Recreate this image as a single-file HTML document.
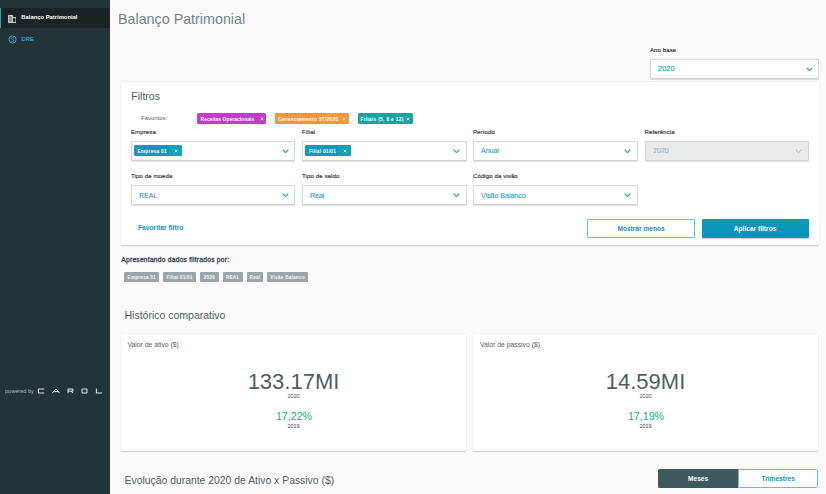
<!DOCTYPE html>
<html><head><meta charset="utf-8">
<style>
*{box-sizing:border-box;margin:0;padding:0}
html,body{width:826px;height:494px;overflow:hidden}
body{font-family:"Liberation Sans",sans-serif;background:#fafafa;position:relative;color:#4a5c64}
.abs{position:absolute;white-space:nowrap;line-height:1}
#side{left:0;top:0;width:110px;height:494px;background:#233438}
#side .act{left:0;top:8px;width:110px;height:20px;background:#1a2427;border-left:1px solid #14aabb}
#side .t1{left:21.3px;top:15px;font-size:5.85px;font-weight:bold;color:#fff}
#side .t2{left:21.6px;top:36.6px;font-size:5.8px;color:#18acdc;-webkit-text-stroke:0.2px #18acdc}
.pow{left:5px;top:389.2px;font-size:5.6px;color:#b3bdc1;letter-spacing:0px}
h1{left:118px;top:12px;font-size:14.3px;font-weight:normal;color:#72838b}
.lbl{font-size:6px;letter-spacing:0.12px;color:#3a3a3a;font-weight:normal;-webkit-text-stroke:0.18px #3a3a3a}
.sel{position:absolute;background:#fff;border:1px solid #d6dadb;border-bottom-color:#cdd2d3;height:19.5px;border-radius:1px;box-shadow:0 0.6px 0.8px rgba(0,0,0,.12)}
.sel .v{position:absolute;left:7px;top:5.3px;font-size:7px;color:#229ccb;line-height:1;-webkit-text-stroke:0.1px #229ccb}
.chev{position:absolute;right:5.5px;top:6.6px;width:7px;height:4.5px}
.card{position:absolute;background:#fff;box-shadow:0 0.6px 1.4px rgba(0,0,0,.2);border-radius:1px}
.chip{position:absolute;height:10.5px;font-size:4.8px;font-weight:bold;color:#fff;border-radius:1.5px;line-height:1;white-space:nowrap;overflow:hidden}
.tag{position:absolute;top:272px;height:9.6px;background:#9aa5a9;color:#f4f6f6;font-size:4.7px;letter-spacing:0.2px;font-weight:bold;line-height:9.6px;padding-top:1.2px;text-align:center;border-radius:1px}
.big{position:absolute;width:345px;text-align:center;line-height:1}
</style></head><body>
<div id="side" class="abs">
  <div class="abs act"></div>
  <svg class="abs" style="left:7.8px;top:14.5px" width="8.4" height="8" viewBox="0 0 8.4 8"><path d="M0.45 0.45H4.6V7.55H0.45Z M1.9 0.45V7.55 M3.2 0.45V7.55" fill="none" stroke="#fff" stroke-width="0.8"/><path d="M4.6 2.6H7.9V7.55H4.6" fill="none" stroke="#fff" stroke-width="0.8"/></svg>
  <div class="abs t1">Balanço Patrimonial</div>
  <svg class="abs" style="left:7.5px;top:35px" width="9" height="9" viewBox="0 0 9 9"><circle cx="4.5" cy="4.5" r="3.6" fill="none" stroke="#1aaedc" stroke-width="0.95"/><path d="M5.8 3.1C5.5 2.5 3.3 2.4 3.3 3.5C3.3 4.6 5.8 4.3 5.8 5.5C5.8 6.6 3.5 6.6 3.1 5.9" fill="none" stroke="#1aaedc" stroke-width="0.85"/></svg>
  <div class="abs t2">DRE</div>
  <div class="abs pow">powered by</div>
  <svg class="abs" style="left:37px;top:388px" width="67" height="6" viewBox="0 0 67 6">
    <g fill="none" stroke="#e6ecee" stroke-width="1">
      <path d="M7.2 1H1.4V5H7.2"/>
      <path d="M15.2 5.2L18.9 0.9L22.6 5.2M16.6 3.6H21.2"/>
      <path d="M31 5.2V1H36V3.1H31M34.2 3.1L36 5.2"/>
      <path d="M45 1H50V5H45Z"/>
      <path d="M59.4 0.5V5H65"/>
    </g>
  </svg>
</div>


<h1 class="abs">Balanço Patrimonial</h1>

<div class="abs lbl" style="left:650px;top:47.2px;font-weight:normal;color:#333">Ano base</div>
<div class="sel" style="left:650px;top:59px;width:169px;height:19.5px"><span class="v" style="top:5px;font-size:7.5px">2020</span><svg class="chev" viewBox="0 0 7 4.5"><path d="M0.6 0.6L3.5 3.6L6.4 0.6" fill="none" stroke="#2a9cc4" stroke-width="1.25"/></svg></div>

<div class="card" style="left:121px;top:82px;width:698px;height:162.5px"></div>
<div class="abs" style="left:131.3px;top:91px;font-size:10.5px;color:#465c66">Filtros</div>
<div class="abs" style="left:141.2px;top:116.1px;font-size:5.9px;color:#5a5a5a">Favoritos:</div>
<div class="chip" style="left:197px;top:113px;width:69px;background:#c23bc9"><span style="position:absolute;left:3.6px;top:4.7px;letter-spacing:0.1px">Receitas Operacionais</span><svg width="4" height="4" viewBox="0 0 4 4" style="position:absolute;left:62.8px;top:3.5px"><path d="M0.7 0.7L3.3 3.3M3.3 0.7L0.7 3.3" stroke="#fff" stroke-width="0.75"/></svg></div>
<div class="chip" style="left:275px;top:113px;width:74px;background:#f7953b"><span style="position:absolute;left:3.3px;top:4.7px;letter-spacing:0.3px">Gerenciamento 3T/2020</span><svg width="4" height="4" viewBox="0 0 4 4" style="position:absolute;left:67px;top:3.5px"><path d="M0.7 0.7L3.3 3.3M3.3 0.7L0.7 3.3" stroke="#fff" stroke-width="0.75"/></svg></div>
<div class="chip" style="left:358px;top:113px;width:55px;background:#17a2a4"><span style="position:absolute;left:2.6px;top:4.7px;letter-spacing:0.33px">Filiais (5, 8 e 12)</span><svg width="4" height="4" viewBox="0 0 4 4" style="position:absolute;left:48.2px;top:3.5px"><path d="M0.7 0.7L3.3 3.3M3.3 0.7L0.7 3.3" stroke="#fff" stroke-width="0.75"/></svg></div>

<div class="abs lbl" style="left:131px;top:128.9px">Empresa</div>
<div class="sel" style="left:131px;top:141.2px;width:164px"><div class="chip" style="left:2.2px;top:3px;width:47.7px;background:#1596bf"><i style="position:absolute;left:35px;top:0;right:0;bottom:0;background:#18a0b9"></i><span style="position:absolute;left:3.2px;top:4.7px;letter-spacing:0.26px">Empresa 01</span><svg width="4" height="4" viewBox="0 0 4 4" style="position:absolute;left:39.8px;top:3.5px"><path d="M0.7 0.7L3.3 3.3M3.3 0.7L0.7 3.3" stroke="#fff" stroke-width="0.75"/></svg></div><svg class="chev" viewBox="0 0 7 4.5"><path d="M0.6 0.6L3.5 3.6L6.4 0.6" fill="none" stroke="#2a9cc4" stroke-width="1.25"/></svg></div>
<div class="abs lbl" style="left:302px;top:128.9px">Filial</div>
<div class="sel" style="left:302px;top:141.2px;width:164.5px"><div class="chip" style="left:2.4px;top:3px;width:45.4px;background:#1596bf"><i style="position:absolute;left:32.3px;top:0;right:0;bottom:0;background:#18a0b9"></i><span style="position:absolute;left:3.5px;top:4.7px;letter-spacing:0.25px">Filial 01/01</span><svg width="4" height="4" viewBox="0 0 4 4" style="position:absolute;left:37.5px;top:3.5px"><path d="M0.7 0.7L3.3 3.3M3.3 0.7L0.7 3.3" stroke="#fff" stroke-width="0.75"/></svg></div><svg class="chev" viewBox="0 0 7 4.5"><path d="M0.6 0.6L3.5 3.6L6.4 0.6" fill="none" stroke="#2a9cc4" stroke-width="1.25"/></svg></div>
<div class="abs lbl" style="left:473px;top:128.9px">Período</div>
<div class="sel" style="left:473px;top:141.2px;width:164.5px"><span class="v">Anual</span><svg class="chev" viewBox="0 0 7 4.5"><path d="M0.6 0.6L3.5 3.6L6.4 0.6" fill="none" stroke="#2a9cc4" stroke-width="1.25"/></svg></div>
<div class="abs lbl" style="left:644.5px;top:128.9px">Referência</div>
<div class="sel" style="left:644.5px;top:141.2px;width:164px;background:#e9eaea;border-color:#d0d4d5"><span class="v" style="color:#b9bdbe;left:7.6px">2020</span><svg class="chev" viewBox="0 0 7 4.5"><path d="M0.6 0.6L3.5 3.6L6.4 0.6" fill="none" stroke="#a7abac" stroke-width="0.8"/></svg></div>

<div class="abs lbl" style="left:131px;top:173px">Tipo de moeda</div>
<div class="sel" style="left:131px;top:185.4px;width:164px"><span class="v">REAL</span><svg class="chev" viewBox="0 0 7 4.5"><path d="M0.6 0.6L3.5 3.6L6.4 0.6" fill="none" stroke="#2a9cc4" stroke-width="1.25"/></svg></div>
<div class="abs lbl" style="left:302px;top:173px">Tipo de saldo</div>
<div class="sel" style="left:302px;top:185.4px;width:164.5px"><span class="v">Real</span><svg class="chev" viewBox="0 0 7 4.5"><path d="M0.6 0.6L3.5 3.6L6.4 0.6" fill="none" stroke="#2a9cc4" stroke-width="1.25"/></svg></div>
<div class="abs lbl" style="left:473px;top:173px">Código da visão</div>
<div class="sel" style="left:473px;top:185.4px;width:164.5px"><span class="v">Visão Balanco</span><svg class="chev" viewBox="0 0 7 4.5"><path d="M0.6 0.6L3.5 3.6L6.4 0.6" fill="none" stroke="#2a9cc4" stroke-width="1.25"/></svg></div>

<div class="abs" style="left:138px;top:225.2px;font-size:6.7px;font-weight:bold;color:#1a8fb5">Favoritar filtro</div>
<div class="abs" style="left:587.4px;top:219px;width:107.3px;height:18.5px;border:1px solid #5ec0da;border-radius:1px;background:#fff;color:#1a8fb5;font-size:6.6px;font-weight:bold;text-align:center;line-height:18px">Mostrar menos</div>
<div class="abs" style="left:701.5px;top:219px;width:107.2px;height:18.5px;background:#0b97bb;border-radius:1px;color:#fff;font-size:6.6px;font-weight:bold;text-align:center;line-height:20px;box-shadow:0 0.5px 1px rgba(0,0,0,.2)">Aplicar filtros</div>

<div class="abs" style="left:121.3px;top:257.1px;font-size:6.7px;letter-spacing:0.23px;color:#37454b;-webkit-text-stroke:0.3px #37454b">Apresentando dados filtrados por:</div>
<div class="tag" style="left:124.2px;width:35.1px">Empresa 01</div>
<div class="tag" style="left:163px;width:33.1px">Filial 01/01</div>
<div class="tag" style="left:199.7px;width:19.4px">2020</div>
<div class="tag" style="left:222.7px;width:20.1px">REAL</div>
<div class="tag" style="left:246.5px;width:16.9px">Real</div>
<div class="tag" style="left:267px;width:41px">Visão Balanco</div>

<div class="abs" style="left:124.5px;top:310.3px;font-size:10.5px;color:#4d6169">Histórico comparativo</div>

<div class="card" style="left:121px;top:334px;width:345px;height:116.8px"></div>
<div class="abs" style="left:127.5px;top:341.6px;font-size:6.8px;color:#5c5c5c">Valor de ativo ($)</div>
<div class="big" style="left:121px;top:370px;font-size:22px;color:#4a5f67;transform:scaleY(1.04);transform-origin:0 0">133.17MI</div>
<div class="big" style="left:121px;top:393.5px;font-size:5.5px;color:#444">2020</div>
<div class="big" style="left:121.5px;top:410.8px;font-size:10.7px;color:#14b08c">17,22%</div>
<div class="big" style="left:121px;top:424px;font-size:5.5px;color:#444">2019</div>

<div class="card" style="left:473px;top:334px;width:345px;height:116.8px"></div>
<div class="abs" style="left:480px;top:341.6px;font-size:6.8px;color:#5c5c5c">Valor de passivo ($)</div>
<div class="big" style="left:473px;top:370px;font-size:22px;color:#4a5f67;transform:scaleY(1.04);transform-origin:0 0">14.59MI</div>
<div class="big" style="left:473px;top:393.5px;font-size:5.5px;color:#444">2020</div>
<div class="big" style="left:473.5px;top:410.8px;font-size:10.7px;color:#14b08c">17,19%</div>
<div class="big" style="left:473px;top:424px;font-size:5.5px;color:#444">2019</div>

<div class="abs" style="left:124.5px;top:476px;font-size:10.4px;color:#4d6169">Evolução durante 2020 de Ativo x Passivo ($)</div>
<div class="abs" style="left:658px;top:469.2px;width:80.2px;height:19.1px;background:#3e5a5f;border-radius:1.5px 0 0 1.5px;color:#fff;font-size:6.6px;font-weight:bold;text-align:center;line-height:19.1px">Meses</div>
<div class="abs" style="left:738.2px;top:469.2px;width:80px;height:19.1px;border:1px solid #5ec0da;border-radius:0 1.5px 1.5px 0;background:#fff;color:#1a8fb5;font-size:6.6px;font-weight:bold;text-align:center;line-height:17.1px">Trimestres</div>
</body></html>
